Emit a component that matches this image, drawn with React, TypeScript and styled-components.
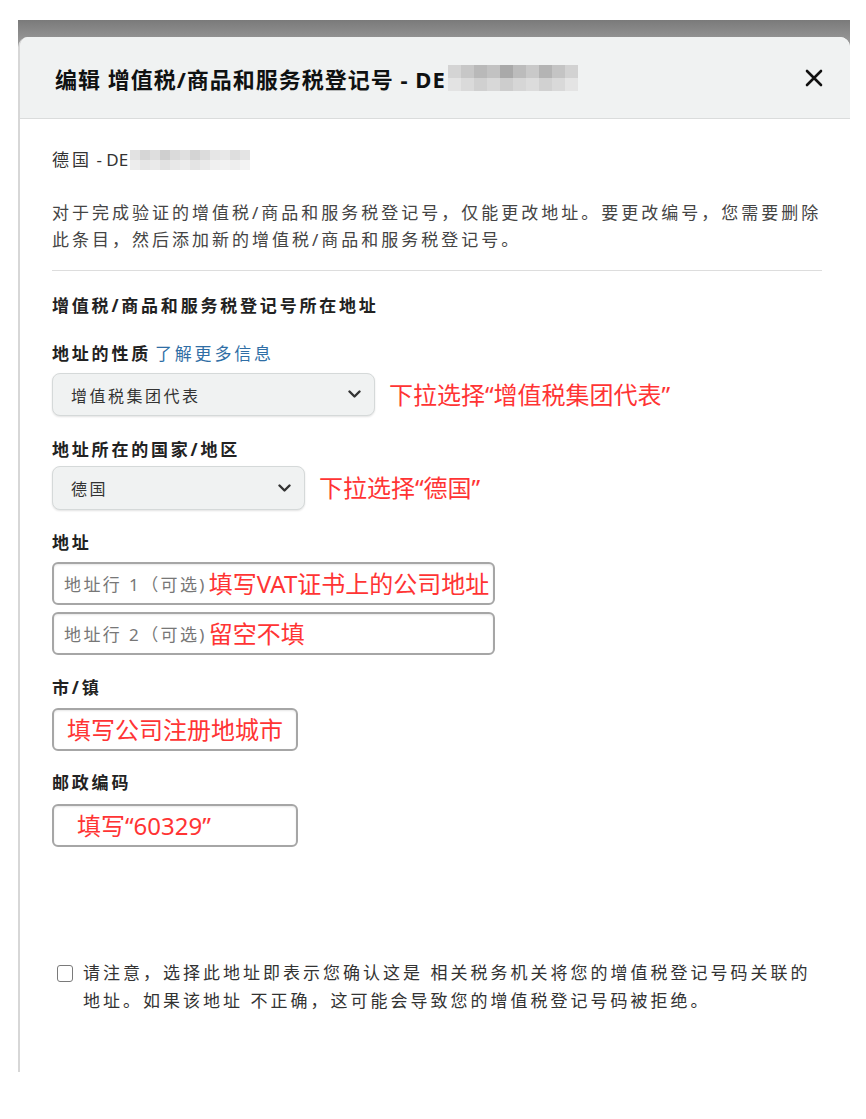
import styled, { createGlobalStyle } from "styled-components";

const GlobalStyle = createGlobalStyle`
  html, body {
    margin: 0;
    background: #ffffff;
  }
  body {
    font-family: "Noto Sans", "Noto Sans CJK SC", sans-serif;
    color: #333333;
  }
`

const Frame = styled.div`
  padding: 20px 16px 0 18px;
`

const Shade = styled.div`
  padding-top: 17px;
  background: linear-gradient(#7a7a7a, #a3a3a3) no-repeat top / 100% 30px;
`

const Modal = styled.div`
  background: #ffffff;
  border-left: 2px solid #d7d7d7;
  border-radius: 10px 10px 0 0;
  overflow: hidden;
`

const Header = styled.div`
  height: 81px;
  display: flex;
  align-items: center;
  justify-content: space-between;
  padding: 0 24px 0 35px;
  background: #f0f2f2;
  border-bottom: 1px solid #dadcdc;
`

const Title = styled.h1`
  margin: 0;
  display: flex;
  align-items: center;
  font-size: 22px;
  font-weight: 700;
  letter-spacing: 1px;
  color: #0f1111;
`

const Close = styled.button`
  width: 24px;
  height: 24px;
  padding: 0;
  border: none;
  background: none;
  display: flex;
  align-items: center;
  justify-content: center;
  cursor: pointer;
`

const Body = styled.div`
  padding: 28px 28px 57px 32px;
`

const Latin = styled.span`
  letter-spacing: 0;
`

const Meta = styled.div`
  display: flex;
  align-items: center;
  font-size: 17px;
  line-height: 26px;
  letter-spacing: 3px;
  color: #333333;
`

const Desc = styled.p`
  margin: 26px 0 0;
  font-size: 17px;
  line-height: 27px;
  letter-spacing: 3px;
  color: #444444;
  white-space: nowrap;
`

const Divider = styled.hr`
  margin: 17px 0 22px;
  border: none;
  border-top: 1px solid #dddddd;
`

const Heading = styled.div`
  font-size: 17px;
  line-height: 26px;
  font-weight: 700;
  letter-spacing: 2.8px;
  color: #222222;
`

const Group = styled.div<{ $top: number }>`
  margin-top: ${(p) => p.$top}px;
`

const Label = styled.div<{ $gap: number }>`
  font-size: 17px;
  line-height: 26px;
  font-weight: 700;
  letter-spacing: 2.8px;
  color: #222222;
  margin-bottom: ${(p) => p.$gap}px;
`

const Link = styled.a`
  font-weight: 400;
  color: #2f6ea5;
  text-decoration: none;
  margin-left: 4px;
`

const Row = styled.div`
  display: flex;
  align-items: center;
  gap: 14px;
`

const SelectBox = styled.div<{ $width: number; $height: number }>`
  box-sizing: border-box;
  width: ${(p) => p.$width}px;
  height: ${(p) => p.$height}px;
  display: flex;
  align-items: center;
  justify-content: space-between;
  padding: 0 13px 0 18px;
  background: #f0f2f2;
  border: 1px solid #d5d9d9;
  border-radius: 8px;
  box-shadow: 0 1px 2px rgba(15, 17, 17, 0.12);
  font-size: 16px;
  letter-spacing: 2.5px;
  color: #333333;
`

const InputBox = styled.div<{ $width: number; $pad: number }>`
  box-sizing: border-box;
  width: ${(p) => p.$width}px;
  height: 43px;
  display: flex;
  align-items: center;
  padding-left: ${(p) => p.$pad}px;
  background: #ffffff;
  border: 2px solid #a6a6a6;
  border-radius: 6px;
  box-shadow: inset 0 1px 2px rgba(15, 17, 17, 0.1);
`

const Stack = styled.div`
  display: flex;
  flex-direction: column;
  gap: 7px;
`

const Placeholder = styled.span`
  font-size: 17px;
  letter-spacing: 2.4px;
  color: #777777;
  white-space: nowrap;
  margin-right: 2px;
`

const Note = styled.span`
  font-size: 24px;
  line-height: 1;
  color: #ff3434;
  white-space: nowrap;
`

const Notice = styled.label`
  margin-top: 112px;
  display: flex;
  align-items: flex-start;
  gap: 10px;
  padding-left: 5px;
  font-size: 17px;
  line-height: 28px;
  letter-spacing: 3px;
  color: #333333;
  white-space: nowrap;
`

const Box = styled.span`
  flex: none;
  box-sizing: border-box;
  width: 16px;
  height: 17px;
  margin-top: 6px;
  border: 1.5px solid #7a7a7a;
  border-radius: 3px;
  background: #ffffff;
`

const Mosaic = styled.span<{ $cols: number; $cell: number }>`
  display: inline-grid;
  grid-template-columns: repeat(${(p) => p.$cols}, ${(p) => p.$cell}px);
  grid-auto-rows: ${(p) => p.$cell}px;
  margin-left: 2px;
`

const Cell = styled.span`
  display: block;
`

function Blur({ shades, cols, cell }: { shades: string[]; cols: number; cell: number }) {
  return (
    <Mosaic $cols={cols} $cell={cell}>
      {shades.map((c, i) => (
        <Cell key={i} style={{ background: c }} />
      ))}
    </Mosaic>
  )
}

const titleShades = [
  "#d4d4d4", "#c7c7c7", "#b9b9b9", "#c2c2c2", "#a9a9a9", "#bcbcbc", "#c9c9c9", "#b4b4b4", "#c4c4c4", "#d2d2d2",
  "#e3e3e3", "#dadada", "#d0d0d0", "#d8d8d8", "#cdcdcd", "#d6d6d6", "#dcdcdc", "#d1d1d1", "#d9d9d9", "#e4e4e4",
]

const metaShades = [
  "#e2e2e2", "#d6d6d6", "#dedede", "#cfcfcf", "#dadada", "#e0e0e0", "#d4d4d4", "#dcdcdc", "#e6e6e6", "#e8e8e8", "#dedede", "#e4e4e4",
  "#ededed", "#e6e6e6", "#eaeaea", "#e2e2e2", "#e8e8e8", "#ececec", "#e4e4e4", "#eaeaea", "#f0f0f0", "#f2f2f2", "#eeeeee", "#f3f3f3",
]

function Chevron() {
  return (
    <svg width="13" height="9" viewBox="0 0 13 9">
      <polyline points="1.5,1.5 6.5,6.5 11.5,1.5" fill="none" stroke="#333" strokeWidth="2.4" strokeLinecap="round" strokeLinejoin="round" />
    </svg>
  )
}

function CloseIcon() {
  return (
    <svg width="18" height="18" viewBox="0 0 18 18">
      <path d="M2 2 L16 16 M16 2 L2 16" stroke="#111" strokeWidth="2.6" strokeLinecap="round" />
    </svg>
  )
}

export default function App() {
  return (
    <>
      <GlobalStyle />
      <Frame>
        <Shade>
          <Modal>
            <Header>
              <Title>
                编辑 增值税/商品和服务税登记号 - DE
                <Blur shades={titleShades} cols={10} cell={13} />
              </Title>
              <Close aria-label="关闭">
                <CloseIcon />
              </Close>
            </Header>

            <Body>
              <Meta>
                <span>
                  德国<Latin> - DE</Latin>
                </span>
                <Blur shades={metaShades} cols={12} cell={10} />
              </Meta>
              <Desc>
                对于完成验证的增值税/商品和服务税登记号，仅能更改地址。要更改编号，您需要删除
                <br />
                此条目，然后添加新的增值税/商品和服务税登记号。
              </Desc>
              <Divider />
              <Heading>增值税/商品和服务税登记号所在地址</Heading>

              <Group $top={22}>
                <Label $gap={6}>
                  地址的性质<Link href="#">了解更多信息</Link>
                </Label>
                <Row>
                  <SelectBox $width={323} $height={43}>
                    增值税集团代表
                    <Chevron />
                  </SelectBox>
                  <Note>下拉选择“增值税集团代表”</Note>
                </Row>
              </Group>

              <Group $top={21}>
                <Label $gap={3}>地址所在的国家/地区</Label>
                <Row>
                  <SelectBox $width={253} $height={44}>
                    德国
                    <Chevron />
                  </SelectBox>
                  <Note>下拉选择“德国”</Note>
                </Row>
              </Group>

              <Group $top={20}>
                <Label $gap={6}>地址</Label>
                <Stack>
                  <InputBox $width={443} $pad={10}>
                    <Placeholder>地址行 1（可选)</Placeholder>
                    <Note>填写VAT证书上的公司地址</Note>
                  </InputBox>
                  <InputBox $width={443} $pad={10}>
                    <Placeholder>地址行 2（可选)</Placeholder>
                    <Note>留空不填</Note>
                  </InputBox>
                </Stack>
              </Group>

              <Group $top={20}>
                <Label $gap={7}>市/镇</Label>
                <InputBox $width={246} $pad={13}>
                  <Note>填写公司注册地城市</Note>
                </InputBox>
              </Group>

              <Group $top={19}>
                <Label $gap={8}>邮政编码</Label>
                <InputBox $width={246} $pad={23}>
                  <Note>填写“60329”</Note>
                </InputBox>
              </Group>

              <Notice>
                <Box />
                <span>
                  请注意，选择此地址即表示您确认这是 相关税务机关将您的增值税登记号码关联的
                  <br />
                  地址。如果该地址 不正确，这可能会导致您的增值税登记号码被拒绝。
                </span>
              </Notice>
            </Body>
          </Modal>
        </Shade>
      </Frame>
    </>
  )
}
